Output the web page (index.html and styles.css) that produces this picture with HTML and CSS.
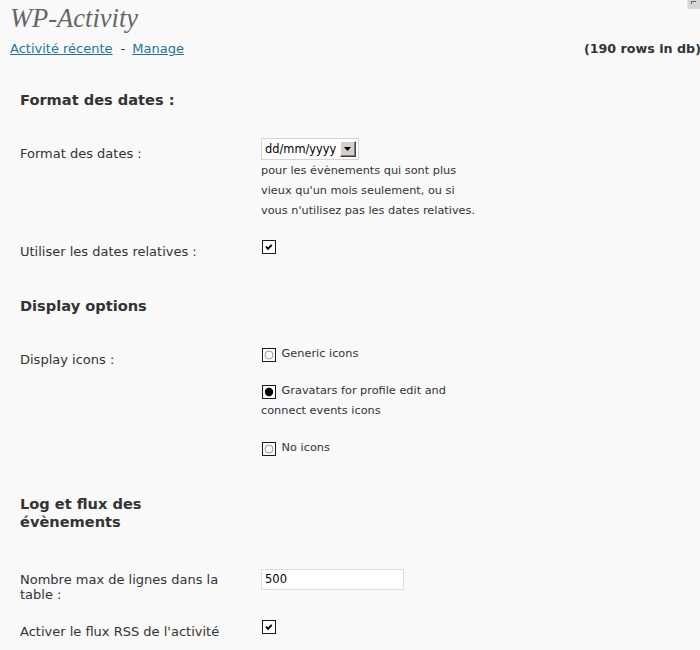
FILE: index.html
```html
<!DOCTYPE html>
<html lang="fr">
<head>
<meta charset="utf-8">
<title>WP-Activity</title>
<link rel="stylesheet" href="styles.css">
</head>
<body>
<div class="screen-tab"><span class="tab-mark"></span></div>
<div class="wrap">
  <h2 class="title">WP-Activity</h2>
  <div class="subnav">
    <span><a href="#">Activité récente</a><span class="sep">-</span><a href="#">Manage</a></span>
    <strong class="count">(190 rows in db)</strong>
  </div>

  <div class="form">
    <h3 class="section-title first">Format des dates :</h3>
    <div class="row row-date">
      <div class="label lbl-date">Format des dates :</div>
      <div class="field">
        <div class="select"><span class="select-text">dd/mm/yyyy</span><span class="select-btn"><svg width="8" height="5" viewBox="0 0 8 5"><polygon points="0,0 7,0 3.5,4" fill="#000"/></svg></span></div>
        <div class="desc">pour les évènements qui sont plus vieux qu'un mois seulement, ou si vous n'utilisez pas les dates relatives.</div>
      </div>
    </div>
    <div class="row row-rel">
      <div class="label lbl-check">Utiliser les dates relatives :</div>
      <div class="field"><span class="check"><svg width="12" height="12" viewBox="0 0 12 12"><polyline points="3,5.5 5,7.8 8.8,3.8" fill="none" stroke="#000" stroke-width="1.8"/></svg></span></div>
    </div>

    <h3 class="section-title sec2">Display options</h3>
    <div class="row row-icons">
      <div class="label lbl-icons">Display icons :</div>
      <div class="field">
        <div class="option"><span class="radio"><svg width="12" height="12" viewBox="0 0 12 12"><circle cx="6" cy="6" r="4" fill="#fff" stroke="#9a9a9a" stroke-width="1"/></svg></span> Generic icons</div>
        <div class="option spaced"><span class="radio"><svg width="12" height="12" viewBox="0 0 12 12"><circle cx="6" cy="6" r="4.2" fill="#000"/></svg></span> Gravatars for profile edit and connect events icons</div>
        <div class="option spaced"><span class="radio"><svg width="12" height="12" viewBox="0 0 12 12"><circle cx="6" cy="6" r="4" fill="#fff" stroke="#9a9a9a" stroke-width="1"/></svg></span> No icons</div>
      </div>
    </div>

    <h3 class="section-title sec3">Log et flux des évènements</h3>
    <div class="row row-max">
      <div class="label lbl-max">Nombre max de lignes dans la table :</div>
      <div class="field"><div class="input">500</div></div>
    </div>
    <div class="row row-rss">
      <div class="label lbl-rss">Activer le flux RSS de l'activité</div>
      <div class="field"><span class="check"><svg width="12" height="12" viewBox="0 0 12 12"><polyline points="3,5.5 5,7.8 8.8,3.8" fill="none" stroke="#000" stroke-width="1.8"/></svg></span></div>
    </div>
  </div>
</div>
</body>
</html>
```

FILE: styles.css
```css
html, body {
  margin: 0;
  padding: 0;
  background: #f9f9f9;
}

body {
  font-family: "DejaVu Sans", Verdana, sans-serif;
  font-size: 13px;
  color: #333;
  width: 700px;
  height: 650px;
  overflow: hidden;
  position: relative;
}

.screen-tab {
  position: absolute;
  top: 0;
  right: 0;
  width: 12px;
  height: 9px;
  background: #d6d6d6;
  border-left: 1px solid #e6e6e6;
}

.tab-mark {
  position: absolute;
  left: 3px;
  top: 1px;
  width: 4px;
  height: 2px;
  border-top: 1px solid #666;
  border-left: 1px solid #666;
}

.title {
  margin: 0;
  padding: 3px 0 0 10px;
  font: italic normal 26.5px/30px "Liberation Serif", "Times New Roman", serif;
  color: #666;
}

.subnav {
  display: flex;
  justify-content: space-between;
  margin-top: 8px;
  padding: 0 0 0 10px;
  line-height: 16px;
  white-space: nowrap;
}

.subnav a {
  color: #21759b;
  text-decoration: underline;
}

.sep {
  padding: 0 7px 0 8px;
}

.count {
  font-weight: bold;
  font-size: 12.7px;
  color: #333;
  margin-right: -1px;
}

.form {
  padding-left: 20px;
}

.section-title {
  margin: 0;
  font-size: 14.6px;
  font-weight: bold;
  line-height: 18px;
  color: #333;
  width: 205px;
}

.section-title.first { margin-top: 34px; }
.section-title.sec2 { margin-top: 37px; }
.section-title.sec3 { margin-top: 37px; }

.row {
  display: grid;
  grid-template-columns: 241px 222px;
  align-items: start;
}

.label {
  line-height: 15px;
  width: 205px;
}

.field {
  line-height: 20px;
  font-size: 11.3px;
}

.row-date { margin-top: 29px; }
.lbl-date { padding-top: 8px; }

.row-rel { margin-top: 19px; }
.lbl-check { padding-top: 4px; }

.row-icons { margin-top: 29px; }
.lbl-icons { padding-top: 8px; }

.row-max { margin-top: 38px; }
.lbl-max { padding-top: 3px; }

.row-rss { margin-top: 18px; }
.lbl-rss { padding-top: 4px; }

.select {
  display: flex;
  align-items: center;
  box-sizing: border-box;
  width: 98px;
  height: 22px;
  background: #fff;
  border: 1px solid #d4d4d4;
  color: #000;
}

.select-text {
  padding-left: 3px;
  flex: 1;
  line-height: 18px;
  font-size: 11.4px;
}

.select-btn {
  display: flex;
  align-items: center;
  justify-content: center;
  box-sizing: border-box;
  width: 16px;
  height: 16px;
  margin-right: 2px;
  background: #d4d0c8;
  border: 1px solid;
  border-color: #fff #404040 #404040 #fff;
  box-shadow: inset -1px -1px 0 #808080;
}

.desc {
  margin-top: 1px;
  line-height: 20px;
}

.check, .radio {
  display: inline-block;
  box-sizing: border-box;
  width: 14px;
  height: 14px;
  border: 1px solid #1a1a1a;
  background: #fff;
  vertical-align: top;
}

.check {
  margin-left: 1px;
}

.check svg, .radio svg {
  display: block;
}

.radio {
  margin: 4px 2px 0 1px;
}

.option.spaced {
  margin-top: 17px;
}

.input {
  box-sizing: border-box;
  width: 143px;
  height: 21px;
  background: #fff;
  border: 1px solid #dcdcdc;
  padding-left: 3px;
  line-height: 19px;
  font-size: 11.5px;
  color: #000;
}
```
